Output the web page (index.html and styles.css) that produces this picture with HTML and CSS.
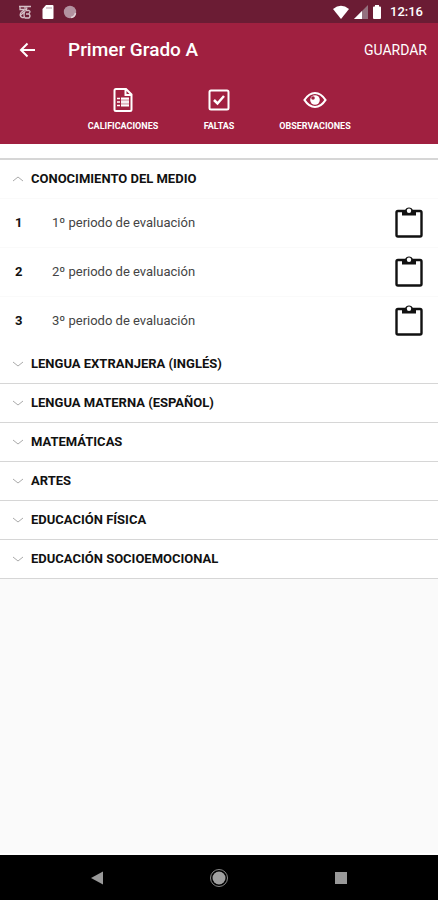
FILE: index.html
```html
<!DOCTYPE html>
<html lang="es">
<head>
<meta charset="utf-8">
<meta name="viewport" content="width=device-width, initial-scale=1">
<title>Primer Grado A</title>
<link rel="stylesheet" href="styles.css">
</head>
<body>
<svg class="defs" aria-hidden="true">
  <symbol id="up" viewBox="0 0 12 8"><path d="M1 6L6 2L11 6" fill="none" stroke="currentColor"/></symbol>
  <symbol id="down" viewBox="0 0 12 8"><path d="M1 2L6 6L11 2" fill="none" stroke="currentColor"/></symbol>
  <symbol id="clipboard" viewBox="0 0 30 34">
    <rect x="2.500" y="5" width="25" height="25.500" rx="1.500" fill="none" stroke="currentColor" stroke-width="2.400"/>
    <path d="M8 5.500l3-1a4.200 4.200 0 0 1 8 0l3 1v4H8z" fill="currentColor"/>
    <circle cx="15" cy="4.800" r="2.200" fill="#fff"/>
  </symbol>
</svg>
<div class="status">
  <div class="status-group">
    <svg width="16" height="16" viewBox="0 0 16 16" fill="none" stroke="#d5bfc6" stroke-width="1.300"><path d="M2 2.500h12M3 2v3.500h4M8 2.500v3L4 8.500q-2 3 1 5h2M10 3.500L9 6.500h3q2 1 0 3M8 7q-2 4 0 7h4q2-2 0-4h-3M4 11l3-3"/></svg>
    <svg width="12" height="16" viewBox="0 0 12 16"><path d="M4 1h6.500q1 0 1 1v12q0 1-1 1h-9q-1 0-1-1V5z" fill="#fff"/><path d="M5 3v2M7 3v2M9 3v2" stroke="#b59aa4"/></svg>
    <svg width="14" height="16" viewBox="0 0 14 16"><circle cx="7" cy="8" r="6.200" fill="#b392a0"/><path d="M8 13.500A5.500 5.500 0 0 0 12.500 9" fill="none" stroke="#e3d3d9" stroke-width="1.500"/></svg>
  </div>
  <div class="status-group status-right">
    <svg width="18" height="16" viewBox="0 0 18 16"><path d="M1 5Q9-1.500 17 5L9 15z" fill="#fff"/></svg>
    <svg width="14" height="16" viewBox="0 0 14 16"><path d="M0 15L14 1V15z" fill="#94707e"/><path d="M0 15L8 7V15z" fill="#fff"/></svg>
    <svg width="10" height="16" viewBox="0 0 10 16"><path d="M3 1h4v1.500h1q1 0 1 1V14q0 1-1 1H2q-1 0-1-1V3.500q0-1 1-1h1z" fill="#fff"/></svg>
    <span class="clock">12:16</span>
  </div>
</div>
<header class="header">
  <div class="appbar">
    <button class="back" type="button" aria-label="Atrás"><svg width="18" height="16" viewBox="0 0 18 16" fill="none" stroke="#fff" stroke-width="2"><path d="M16 8H2M8.500 1.500L2 8l6.500 6.500"/></svg></button>
    <h1 class="title">Primer Grado A</h1>
    <button class="save" type="button">GUARDAR</button>
  </div>
  <nav class="tabs">
    <button class="tab" type="button">
      <svg width="20" height="24" viewBox="0 0 20 24" fill="none" stroke="#fff" stroke-width="2"><path d="M1.500 2.500q0-1.500 1.500-1.500H13l5.500 5.500V21.500q0 1.500-1.500 1.500H3q-1.500 0-1.500-1.500zM12.500 1v6h6"/><path d="M4 10.500h3M4 14h3M4 17.500h3" stroke-width="1.500"/><path d="M8 9.500h8v9H8z" fill="#dfb5c0" stroke="none"/><path d="M8 10.500h8M8 14h8M8 17.500h8" stroke-width="1.300"/></svg>
      <span>CALIFICACIONES</span>
    </button>
    <button class="tab" type="button">
      <svg width="22" height="24" viewBox="0 0 22 24" fill="none" stroke="#fff"><rect x="1.500" y="2.500" width="19" height="19" rx="1.500" stroke-width="2"/><path d="M6 12l3.500 3.500L16 8" stroke-width="2.500"/></svg>
      <span>FALTAS</span>
    </button>
    <button class="tab" type="button">
      <svg width="24" height="24" viewBox="0 0 24 24"><path d="M1.500 12Q6 5 12 5t10.500 7Q18 19 12 19T1.500 12z" fill="none" stroke="#fff" stroke-width="2.200"/><circle cx="12" cy="12" r="4.800" fill="#fff"/><circle cx="10" cy="10" r="1.800" fill="#a02040"/></svg>
      <span>OBSERVACIONES</span>
    </button>
  </nav>
</header>
<main class="content">
  <section class="group first">
    <h2><button class="subject" type="button" aria-expanded="true"><svg class="chevron"><use href="#up"/></svg>CONOCIMIENTO DEL MEDIO</button></h2>
    <ul class="periods">
      <li class="period"><span class="number">1</span><span class="name">1º periodo de evaluación</span><button class="open" type="button" aria-label="Evaluar 1º periodo"><svg><use href="#clipboard"/></svg></button></li>
      <li class="period"><span class="number">2</span><span class="name">2º periodo de evaluación</span><button class="open" type="button" aria-label="Evaluar 2º periodo"><svg><use href="#clipboard"/></svg></button></li>
      <li class="period"><span class="number">3</span><span class="name">3º periodo de evaluación</span><button class="open" type="button" aria-label="Evaluar 3º periodo"><svg><use href="#clipboard"/></svg></button></li>
    </ul>
  </section>
  <h2 class="group"><button class="subject" type="button" aria-expanded="false"><svg class="chevron"><use href="#down"/></svg>LENGUA EXTRANJERA (INGLÉS)</button></h2>
  <h2 class="group"><button class="subject" type="button" aria-expanded="false"><svg class="chevron"><use href="#down"/></svg>LENGUA MATERNA (ESPAÑOL)</button></h2>
  <h2 class="group"><button class="subject" type="button" aria-expanded="false"><svg class="chevron"><use href="#down"/></svg>MATEMÁTICAS</button></h2>
  <h2 class="group"><button class="subject" type="button" aria-expanded="false"><svg class="chevron"><use href="#down"/></svg>ARTES</button></h2>
  <h2 class="group"><button class="subject" type="button" aria-expanded="false"><svg class="chevron"><use href="#down"/></svg>EDUCACIÓN FÍSICA</button></h2>
  <h2 class="group"><button class="subject" type="button" aria-expanded="false"><svg class="chevron"><use href="#down"/></svg>EDUCACIÓN SOCIOEMOCIONAL</button></h2>
</main>
<footer class="navbar">
  <button type="button" aria-label="Volver"><svg width="20" height="20" viewBox="0 0 20 20"><path d="M4 10L16 3.500v13z" fill="#999"/></svg></button>
  <button type="button" aria-label="Inicio"><svg width="20" height="20" viewBox="0 0 20 20"><circle cx="10" cy="10" r="8.500" fill="none" stroke="#888"/><circle cx="10" cy="10" r="6.500" fill="#a0a0a0"/></svg></button>
  <button type="button" aria-label="Recientes"><svg width="20" height="20" viewBox="0 0 20 20"><path d="M4 4h12v12H4z" fill="#999"/></svg></button>
</footer>
</body>
</html>
```
FILE: styles.css
```css
* { box-sizing: border-box; }

body {
  display: flex;
  flex-direction: column;
  min-height: 100vh;
  margin: 0;
  background: #fafafa;
  color: #111;
  font-family: Roboto, "Liberation Sans", sans-serif;
}

h1, h2, ul { margin: 0; padding: 0; }

button {
  padding: 0;
  border: 0;
  background: none;
  color: inherit;
  font: inherit;
}

svg { display: block; flex: none; }

.defs { position: absolute; width: 0; height: 0; }

.status {
  display: flex;
  justify-content: space-between;
  align-items: center;
  height: 23px;
  padding: 0 15px 0 17px;
  background: #6b1c34;
  color: #fff;
}

.status-group { display: flex; align-items: center; gap: 9px; }
.status-right { gap: 4px; }
.clock { font-size: 13px; font-weight: 500; line-height: 16px; padding-left: 4px; }

.header { padding-bottom: 12px; background: #a02040; color: #fff; }

.appbar { display: flex; align-items: center; height: 54px; padding: 0 11px 0 19px; }
.back { width: 49px; }
.title { flex: 1; font-size: 19px; font-weight: 500; line-height: 24px; }
.save { font-size: 14px; line-height: 20px; }

.tabs { display: flex; justify-content: center; padding-top: 11px; }

.tab {
  display: flex;
  flex-direction: column;
  align-items: center;
  gap: 8px;
  width: 96px;
  font-size: 9px;
  font-weight: 700;
  line-height: 12px;
}

.content { padding-top: 14px; background: #fff; }

.group { border-bottom: 1px solid #d6d6d6; }
.group.first { border-top: 2px solid #d6d6d6; border-bottom: 0; }

.subject {
  display: flex;
  align-items: center;
  gap: 7px;
  width: 100%;
  height: 38px;
  padding: 0 12px;
  font-size: 13px;
  font-weight: 700;
  line-height: 18px;
  text-align: left;
}

.chevron { width: 12px; height: 8px; color: #aaa; }

.periods { list-style: none; }

.period {
  display: flex;
  align-items: center;
  height: 49px;
  padding: 0 14px 0 15px;
  border-top: 1px solid #fafafa;
  font-size: 13px;
  line-height: 18px;
}

.number { width: 37px; font-weight: 700; }
.name { flex: 1; color: #444; }
.open svg { width: 30px; height: 34px; }

.navbar {
  display: flex;
  justify-content: center;
  align-items: center;
  gap: 102px;
  height: 47px;
  margin-top: auto;
  border-top: 2px solid #fff;
  background: #000;
}
```
